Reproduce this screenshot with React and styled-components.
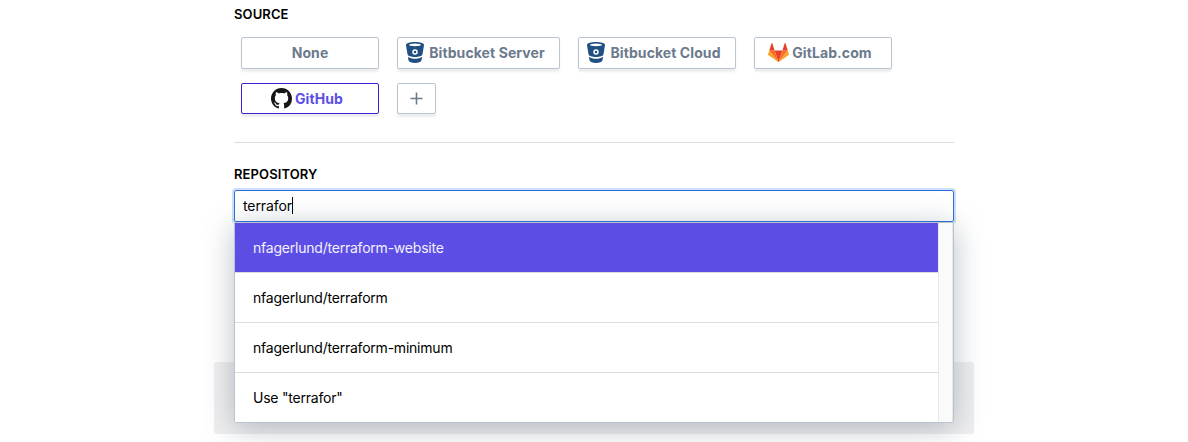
import React from "react";
import styled, { createGlobalStyle } from "styled-components";

const Global = createGlobalStyle`
  * { box-sizing: border-box; }
  body { margin: 0; background: #fff; color: #000; overflow: hidden; font-family: Inter, "Liberation Sans", sans-serif; }
`;

const Page = styled.main`
  width: 760px;
  height: 442px;
  margin: 0 auto;
  padding-top: 5px;
`;

const Section = styled.section`
  padding: 0 20px;
`;

const Label = styled.h2`
  margin: 0;
  font-size: 13px;
  line-height: 19px;
  font-weight: 600;
  letter-spacing: 0.1px;
`;

const Sources = styled.div`
  display: flex;
  flex-wrap: wrap;
  gap: 14px 18px;
  padding: 13px 7px 28px;
  border-bottom: 1px solid #dcdcdc;
  margin-bottom: 22px;
`;

const SourceButton = styled.button`
  display: flex;
  align-items: center;
  justify-content: center;
  gap: ${(p) => p.$gap || 3}px;
  width: ${(p) => p.$width}px;
  height: ${(p) => p.$height || 32}px;
  padding: ${(p) => (p.$logo ? "0 6px 0 0" : "0")};
  border: 1px solid ${(p) => (p.$active ? "#3a22d0" : "#bac4d0")};
  border-radius: 2px;
  background: #fff;
  box-shadow: 0 3px 2px rgba(0, 0, 0, 0.07);
  color: ${(p) => (p.$active ? "#5c4ee5" : "#6b7a8c")};
  font: 700 14px/20px Inter, "Liberation Sans", sans-serif;
  letter-spacing: 0.08px;
  white-space: nowrap;

  svg { flex: none; display: block; }
`;

const Combo = styled.div`
  position: relative;
  padding-top: 6px;
`;

const Field = styled.div`
  display: flex;
  align-items: center;
  height: 32px;
  padding: 0 8px 1px;
  border: 1px solid #2f6fd8;
  border-radius: 2px;
  box-shadow: 0 0 0 2px #cfdffa;
  font-size: 14px;
  letter-spacing: -0.1px;
`;

const Caret = styled.span`
  width: 1px;
  height: 17px;
  background: #000;
`;

const Menu = styled.div`
  position: absolute;
  top: 100%;
  left: 0;
  right: 0;
  display: flex;
  height: 201px;
  border: 1px solid #bac4d0;
  border-radius: 0 0 2px 2px;
  background: #fff;
  box-shadow: 0 5px 30px rgba(80, 97, 115, 0.4);
`;

const Options = styled.ul`
  flex: 1;
  margin: 0;
  padding: 0;
  list-style: none;
`;

const Option = styled.li`
  height: 50px;
  padding-left: 18px;
  border-bottom: 1px solid #dcdcdc;
  background: ${(p) => (p.$active ? "#5c4ee5" : "#fff")};
  background-clip: padding-box;
  color: ${(p) => (p.$active ? "#f3f1ff" : "#000")};
  font-size: 14px;
  line-height: 50px;
  letter-spacing: -0.22px;

  &:last-child { height: 49px; border-bottom: 0; }
`;

const Scrollbar = styled.div`
  width: 15px;
  border: solid #e8e8e8;
  border-width: 0 1px;
  background: #fafafa;
`;

const Footer = styled.div`
  height: 72px;
  margin-top: 140px;
  border-radius: 3px;
  background: #efeff0;
`;

const BucketIcon = () => (
  <svg width="18" height="22" viewBox="0 0 18 22">
    <path fill="#205081" d="M9 0C4 0 0 1.100 0 2.800c0 .5 1.100 7.200 1.600 9.700.3 1.300 3.300 2.600 7.400 2.600s7.100-1.300 7.400-2.600C16.900 10 18 3.300 18 2.800 18 1.100 14 0 9 0Z" />
    <ellipse cx="9" cy="2.900" rx="6" ry="1.300" fill="#fff" />
    <circle cx="9" cy="10" r="2" fill="#205081" stroke="#fff" strokeWidth="1.500" />
    <path fill="#205081" d="M2.200 14.900c1.700 1.200 4.100 1.800 6.800 1.800s5.100-.6 6.800-1.800c.2 0 .3.200.3.400l-.7 3.200C14.900 20 12.300 21 9 21s-5.900-1-6.400-2.500l-.7-3.200c0-.2.100-.4.300-.4Z" />
  </svg>
);

const GitLabIcon = () => (
  <svg width="21" height="20" viewBox="0 0 210 200">
    <path fill="#e24329" d="m105.060 193.660 38.640-118.920H66.420Z" />
    <path fill="#fc6d26" d="M105.060 193.660 66.420 74.740H12.270Zm0 0 38.640-118.920h54.150Z" />
    <path fill="#fca326" d="M12.270 74.740.530 110.880a8 8 0 0 0 2.900 8.940l101.630 73.840Zm185.580 0 11.740 36.140a8 8 0 0 1-2.900 8.940l-101.630 73.840Z" />
    <path fill="#e24329" d="M12.270 74.740h54.150L43.150 3.120c-1.200-3.690-6.410-3.690-7.610 0Zm185.580 0H143.700l23.270-71.620c1.200-3.690 6.410-3.690 7.610 0Z" />
  </svg>
);

const GitHubIcon = () => (
  <svg width="21" height="21" viewBox="0 0 16 16">
    <path fill="#161514" d="M8 0C3.580 0 0 3.580 0 8c0 3.540 2.290 6.530 5.470 7.590.4.070.55-.17.55-.38 0-.19-.01-.82-.01-1.490-2.010.37-2.530-.49-2.690-.94-.09-.23-.48-.94-.82-1.130-.28-.15-.68-.52-.01-.53.63-.01 1.080.58 1.230.82.72 1.210 1.870.87 2.330.66.07-.52.28-.87.51-1.070-1.780-.2-3.640-.89-3.640-3.950 0-.87.31-1.590.82-2.150-.08-.2-.36-1.020.08-2.120 0 0 .67-.21 2.200.82.64-.18 1.320-.27 2-.27s1.360.09 2 .27c1.530-1.040 2.200-.82 2.200-.82.44 1.100.16 1.920.08 2.120.51.56.82 1.270.82 2.150 0 3.070-1.870 3.750-3.650 3.950.29.25.54.73.54 1.480 0 1.070-.01 1.930-.01 2.200 0 .21.15.46.55.38A8.010 8.010 0 0 0 16 8c0-4.420-3.580-8-8-8Z" />
  </svg>
);

const PlusIcon = () => (
  <svg width="13" height="13" viewBox="0 0 13 13" stroke="#6b7a8c" strokeWidth="1.600">
    <path d="M6.500 .5v12M.5 6.500h12" />
  </svg>
);

const repositories = [
  "nfagerlund/terraform-website",
  "nfagerlund/terraform",
  "nfagerlund/terraform-minimum",
  'Use "terrafor"',
];

export default function App() {
  return (
    <Page>
      <Global />
      <Section>
        <Label>SOURCE</Label>
        <Sources>
          <SourceButton $width={138}>None</SourceButton>
          <SourceButton $width={163} $gap={5} $logo><BucketIcon />Bitbucket Server</SourceButton>
          <SourceButton $width={158} $gap={5} $logo><BucketIcon />Bitbucket Cloud</SourceButton>
          <SourceButton $width={138} $logo><GitLabIcon />GitLab.com</SourceButton>
          <SourceButton $width={138} $height={31} $active $logo><GitHubIcon />GitHub</SourceButton>
          <SourceButton $width={39} $height={31} aria-label="Add source"><PlusIcon /></SourceButton>
        </Sources>
        <Label>REPOSITORY</Label>
        <Combo>
          <Field>terrafor<Caret /></Field>
          <Menu>
            <Options>
              {repositories.map((name, i) => (
                <Option key={name} $active={i === 0}>{name}</Option>
              ))}
            </Options>
            <Scrollbar />
          </Menu>
        </Combo>
      </Section>
      <Footer />
    </Page>
  );
}
